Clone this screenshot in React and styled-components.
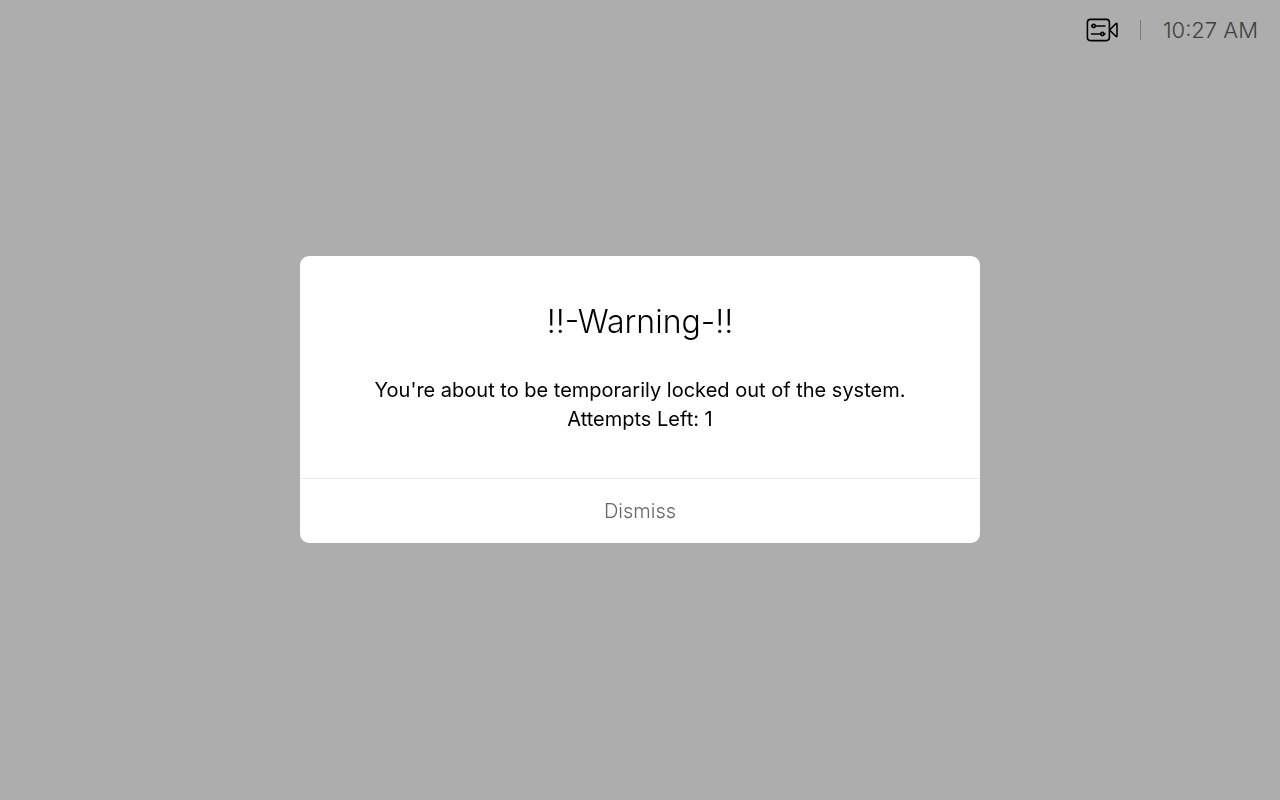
import React from "react";
import styled, { createGlobalStyle } from "styled-components";

const GlobalStyle = createGlobalStyle`
  *, *::before, *::after { box-sizing: border-box; }
  body {
    margin: 0;
    background: #adadad;
    color: #000;
    font-family: Inter, "Liberation Sans", sans-serif;
    font-size: 20px;
  }
`;

const Page = styled.div`
  min-height: 100vh;
`;

const StatusBar = styled.header`
  display: flex;
  align-items: center;
  justify-content: flex-end;
  height: 60px;
  padding: 0 22px;
`;

const CameraButton = styled.button`
  display: flex;
  padding: 0;
  border: 0;
  background: none;
  color: #000;
`;

const Divider = styled.span`
  width: 1px;
  height: 20px;
  margin: 0 22px;
  background: #7c7c7c;
`;

const Clock = styled.time`
  color: #404040;
  font-size: 22px;
  font-weight: 300;
  line-height: 28px;
`;

const Overlay = styled.div`
  position: fixed;
  inset: 0;
  display: flex;
  align-items: center;
  justify-content: center;
  padding-bottom: 2px;
  pointer-events: none;
`;

const Dialog = styled.section`
  width: 100%;
  max-width: 680px;
  border-radius: 9px;
  overflow: hidden;
  background: #fff;
  text-align: center;
  pointer-events: auto;
`;

const DialogBody = styled.div`
  padding: 44px 40px;
`;

const Title = styled.h1`
  margin: 0 0 32px;
  font-size: 32px;
  font-weight: 300;
  line-height: 44px;
`;

const Message = styled.p`
  margin: 0;
  font-weight: 400;
  line-height: 29px;
`;

const DismissButton = styled.button`
  display: block;
  width: 100%;
  height: 65px;
  border: 0;
  border-top: 1px solid #ebebeb;
  background: none;
  color: #666;
  font: inherit;
  font-weight: 300;
`;

function CameraControlIcon() {
  return (
    <svg width="32" height="24" viewBox="0 0 32 24" fill="none" stroke="currentColor" strokeWidth="1.6" strokeLinecap="round" strokeLinejoin="round" aria-hidden="true">
      <rect x="1.4" y="1.4" width="22" height="21.2" rx="3" />
      <path d="M24.3 11.3L29.8 5.8Q31 4.8 31 6.3V17.7Q31 19.2 29.8 18.2L24.3 12.7Q23.7 12 24.3 11.3z" />
      <circle cx="7.7" cy="8" r="1.6" />
      <path d="M9.5 8H19M5.5 16H14.6" />
      <circle cx="16.4" cy="16" r="1.6" />
      <path d="M5.5 8H6M18.1 16H19" />
    </svg>
  );
}

export default function App() {
  return (
    <>
      <GlobalStyle />
      <Page>
        <StatusBar>
          <CameraButton type="button" aria-label="Camera controls">
            <CameraControlIcon />
          </CameraButton>
          <Divider />
          <Clock>10:27 AM</Clock>
        </StatusBar>
        <Overlay>
          <Dialog role="alertdialog" aria-modal="true" aria-labelledby="warning-title" aria-describedby="warning-message">
            <DialogBody>
              <Title id="warning-title">!!-Warning-!!</Title>
              <Message id="warning-message">
                You're about to be temporarily locked out of the system.
                <br />
                Attempts Left: 1
              </Message>
            </DialogBody>
            <DismissButton type="button">Dismiss</DismissButton>
          </Dialog>
        </Overlay>
      </Page>
    </>
  );
}
